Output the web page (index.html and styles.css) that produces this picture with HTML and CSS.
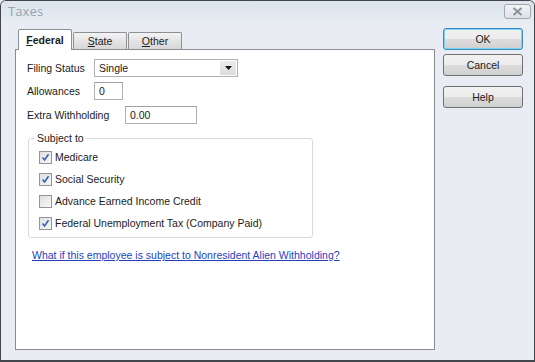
FILE: index.html
```html
<!DOCTYPE html>
<html>
<head>
<meta charset="utf-8">
<link rel="stylesheet" href="styles.css">
</head>
<body>
<div class="window">
  <div class="titlebar">
    <span class="title">Taxes</span>
    <span class="close"><svg width="11" height="9" viewBox="0 0 11 9"><path d="M1.5 1 L9.5 8 M9.5 1 L1.5 8" stroke="#8a929c" stroke-width="2" fill="none"/></svg></span>
  </div>
  <div class="client">
    <div class="tabarea">
      <div class="tabs">
        <div class="tab active"><u>F</u>ederal</div>
        <div class="tab"><u>S</u>tate</div>
        <div class="tab"><u>O</u>ther</div>
      </div>
      <div class="panel">
        <div class="row">
          <span class="label w1">Filing Status</span>
          <div class="select"><span class="value">Single</span><span class="arrow"><svg width="7" height="4" viewBox="0 0 7 4"><path d="M0 0 H7 L3.5 4 Z" fill="#111"/></svg></span></div>
        </div>
        <div class="row r2">
          <span class="label w1">Allowances</span>
          <div class="input small">0</div>
        </div>
        <div class="row r3">
          <span class="label w2">Extra Withholding</span>
          <div class="input mid">0.00</div>
        </div>
        <fieldset class="group">
          <legend>Subject to</legend>
          <div class="check"><span class="box on"><svg width="9" height="9" viewBox="0 0 9 9"><path d="M1.5 4.5 L3.6 7 L7.5 1.2" stroke="#3a62b0" stroke-width="1.6" fill="none"/></svg></span>Medicare</div>
          <div class="check"><span class="box on"><svg width="9" height="9" viewBox="0 0 9 9"><path d="M1.5 4.5 L3.6 7 L7.5 1.2" stroke="#3a62b0" stroke-width="1.6" fill="none"/></svg></span>Social Security</div>
          <div class="check"><span class="box"></span>Advance Earned Income Credit</div>
          <div class="check"><span class="box on"><svg width="9" height="9" viewBox="0 0 9 9"><path d="M1.5 4.5 L3.6 7 L7.5 1.2" stroke="#3a62b0" stroke-width="1.6" fill="none"/></svg></span>Federal Unemployment Tax (Company Paid)</div>
        </fieldset>
        <a class="link" href="#">What if this employee is subject to Nonresident Alien Withholding?</a>
      </div>
    </div>
    <div class="buttons">
      <div class="btn default">OK</div>
      <div class="btn cancel">Cancel</div>
      <div class="btn help">Help</div>
    </div>
  </div>
</div>
</body>
</html>
```

FILE: styles.css
```css
* { box-sizing: border-box; }
html, body { margin: 0; padding: 0; }
body {
  width: 535px;
  height: 362px;
  font-family: "Liberation Sans", Arial, sans-serif;
  font-size: 10.5px;
  color: #1b1b1b;
  background: #e9edf2;
}
.window {
  width: 535px;
  height: 362px;
  border: 1px solid #41464c;
  border-bottom-width: 2px;
  border-radius: 6px 6px 0 0;
  background: #e9edf3;
  display: flex;
  flex-direction: column;
}
.titlebar {
  height: 20px;
  display: flex;
  align-items: center;
  justify-content: space-between;
  padding: 0 3px 0 7px;
  background: linear-gradient(#dce4ec, #e6ebf1);
  border-radius: 5px 5px 0 0;
}
.title {
  font-family: "Open Sans", "Noto Sans", sans-serif;
  font-size: 13px;
  color: #98a3af;
  letter-spacing: 0.1px;
}
.close {
  width: 27px;
  height: 15px;
  border: 1px solid #a0a8b2;
  border-radius: 3px;
  background: linear-gradient(#f1f3f6, #dde2e8);
  display: flex;
  align-items: center;
  justify-content: center;
}
.client {
  display: flex;
  padding: 7px 0 0 14px;
}
.tabarea {
  width: 420px;
  display: flex;
  flex-direction: column;
}
.tabs {
  height: 21px;
  display: flex;
  align-items: flex-end;
  padding-left: 3px;
}
.tab {
  width: 54px;
  height: 17px;
  border: 1px solid #8d9096;
  border-bottom: none;
  border-radius: 2px 2px 0 0;
  background: linear-gradient(#f3f3f3, #e4e4e4 50%, #d8d8d8);
  display: flex;
  align-items: center;
  justify-content: center;
  margin-left: 1px;
}
.tab.active {
  position: relative;
  z-index: 1;
  height: 21px;
  margin-bottom: -1px;
  margin-left: 0;
  background: #ffffff;
  font-weight: bold;
  padding-bottom: 1px;
}
.panel {
  height: 301px;
  border: 1px solid #898c95;
  background: #ffffff;
  padding: 9px 0 0 11px;
  display: flex;
  flex-direction: column;
  align-items: flex-start;
}
.row {
  display: flex;
  align-items: center;
  height: 18px;
}
.row.r2 { margin-top: 5px; }
.row.r3 { margin-top: 6px; }
.label.w1 { width: 67px; }
.label.w2 { width: 98px; }
.select {
  width: 144px;
  height: 18px;
  border: 1px solid #acb0b8;
  display: flex;
  align-items: center;
  justify-content: space-between;
  padding: 0 1px 0 4px;
}
.arrow {
  width: 16px;
  height: 14px;
  background: linear-gradient(#ececec, #dcdcdc);
  display: flex;
  align-items: center;
  justify-content: center;
}
.input {
  height: 18px;
  border: 1px solid #acb0b8;
  border-top-color: #9da2aa;
  display: flex;
  align-items: center;
  padding-left: 4px;
}
.input.small { width: 29px; }
.input.mid { width: 72px; }
.group {
  margin: 8px 0 0 1px;
  width: 285px;
  padding: 6px 0 7px 10px;
  border: 1px solid #d3dce2;
  border-radius: 3px;
  min-inline-size: 0;
}
.group legend {
  padding: 0 3px;
  margin-left: -5px;
  line-height: 12px;
}
.check {
  display: flex;
  align-items: center;
  height: 14px;
  margin-top: 8px;
}
.check:first-of-type { margin-top: 0; }
.box {
  width: 13px;
  height: 13px;
  border: 1px solid #939598;
  background: linear-gradient(135deg, #dfe0e3, #f7f7f7);
  margin-right: 3px;
  display: flex;
  align-items: center;
  justify-content: center;
}
.link {
  margin: 11px 0 0 5px;
  color: #1f3fbf;
  text-decoration: underline;
  line-height: 12px;
}
.buttons {
  margin-left: 8px;
  width: 80px;
  display: flex;
  flex-direction: column;
}
.btn {
  height: 22px;
  border: 1px solid #707070;
  border-radius: 3px;
  background: linear-gradient(#f2f2f2, #ebebeb 49%, #dddddd 50%, #cfcfcf);
  display: flex;
  align-items: center;
  justify-content: center;
}
.btn.default {
  border-color: #3a8cc0;
  box-shadow: inset 0 0 0 1px #7fd2f2;
}
.btn.cancel { margin-top: 4px; }
.btn.help { margin-top: 10px; }
```
